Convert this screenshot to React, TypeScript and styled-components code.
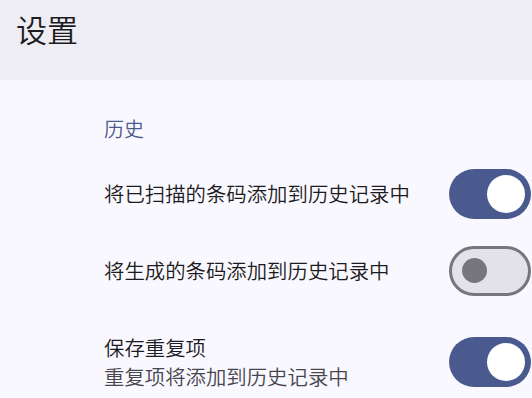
import React, { useState } from "react";
import styled, { createGlobalStyle } from "styled-components";

const GlobalStyle = createGlobalStyle`
  html, body {
    margin: 0;
    padding: 0;
    background: #faf8ff;
  }
  body {
    font-family: "Noto Sans CJK SC", "Noto Sans", Roboto, sans-serif;
    -webkit-font-smoothing: antialiased;
  }
`;

const Screen = styled.div`
  width: 532px;
  height: 398px;
  overflow: hidden;
  background: #faf8ff;
  display: flex;
  flex-direction: column;
`;

const AppBar = styled.header`
  height: 80px;
  flex-shrink: 0;
  background: #eeedf3;
  display: flex;
  align-items: flex-start;
  padding: 7px 0 0 16px;
  box-sizing: border-box;
`;

const Title = styled.h1`
  margin: 0;
  font-size: 31px;
  line-height: 44px;
  font-weight: 350;
  color: #1b1b21;
`;

const Content = styled.main`
  display: flex;
  flex-direction: column;
  padding-left: 104px;
`;

const SectionTitle = styled.h2`
  margin: 0;
  padding: 34px 0 12px;
  font-size: 20px;
  line-height: 29px;
  font-weight: 350;
  color: #4a5a8f;
`;

const Row = styled.div`
  display: flex;
  align-items: center;
  gap: 16px;
  padding-right: 1px;
`;

const Texts = styled.div`
  flex: 1;
  display: flex;
  flex-direction: column;
  min-width: 0;
  padding: 24px 0;
`;

const Label = styled.span`
  font-size: 20.4px;
  line-height: 29px;
  font-weight: 350;
  color: #1b1b21;
  white-space: nowrap;
`;

const Summary = styled.span`
  font-size: 20.4px;
  line-height: 29px;
  font-weight: 350;
  color: #46464f;
  white-space: nowrap;
`;

const Track = styled.button<{ $on: boolean }>`
  flex-shrink: 0;
  width: 82px;
  height: 50px;
  border-radius: 25px;
  box-sizing: border-box;
  padding: 0;
  cursor: pointer;
  display: flex;
  align-items: center;
  border: ${(p) => (p.$on ? "none" : "3px solid #77767f")};
  background: ${(p) => (p.$on ? "#4a5a8f" : "#e3e2e9")};
  justify-content: ${(p) => (p.$on ? "flex-end" : "flex-start")};
`;

const Thumb = styled.span<{ $on: boolean }>`
  display: block;
  border-radius: 50%;
  width: ${(p) => (p.$on ? 38 : 25)}px;
  height: ${(p) => (p.$on ? 38 : 25)}px;
  margin: ${(p) => (p.$on ? "0 6px 0 0" : "0 0 0 10px")};
  background: ${(p) => (p.$on ? "#ffffff" : "#77767f")};
`;

type Setting = { label: string; summary?: string; on: boolean };

const initial: Setting[] = [
  { label: "将已扫描的条码添加到历史记录中", on: true },
  { label: "将生成的条码添加到历史记录中", on: false },
  { label: "保存重复项", summary: "重复项将添加到历史记录中", on: true },
];

export default function App() {
  const [items, setItems] = useState(initial);

  const toggle = (i: number) =>
    setItems((prev) => prev.map((s, j) => (j === i ? { ...s, on: !s.on } : s)));

  return (
    <Screen>
      <GlobalStyle />
      <AppBar>
        <Title>设置</Title>
      </AppBar>
      <Content>
        <SectionTitle>历史</SectionTitle>
        {items.map((s, i) => (
          <Row key={s.label}>
            <Texts>
              <Label>{s.label}</Label>
              {s.summary && <Summary>{s.summary}</Summary>}
            </Texts>
            <Track $on={s.on} onClick={() => toggle(i)} aria-pressed={s.on}>
              <Thumb $on={s.on} />
            </Track>
          </Row>
        ))}
      </Content>
    </Screen>
  );
}
